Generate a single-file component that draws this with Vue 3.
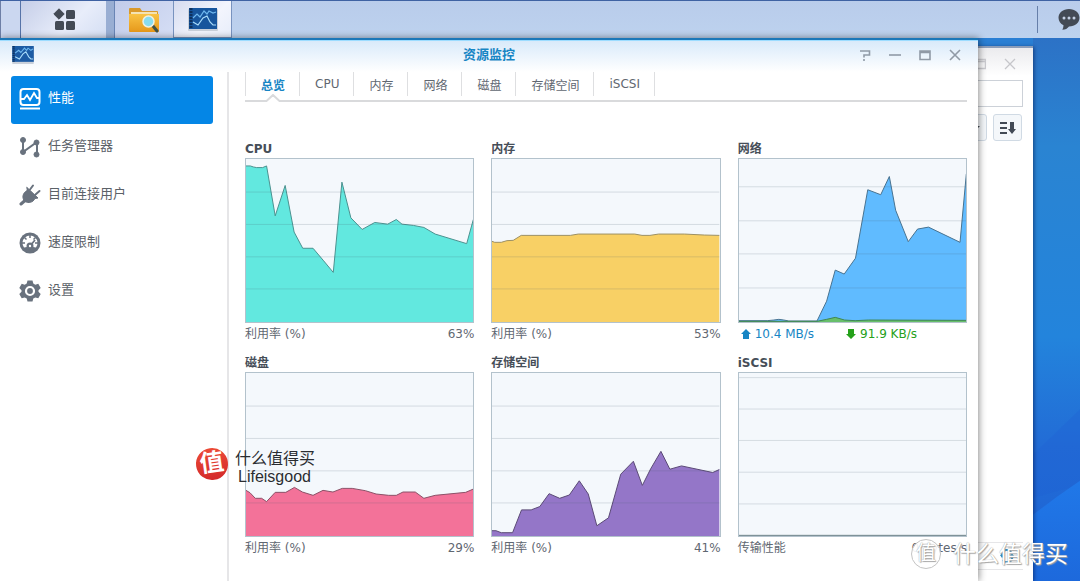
<script setup>
import { ref } from 'vue'

const tabs = ['总览', 'CPU', '内存', '网络', '磁盘', '存储空间', 'iSCSI']
const activeTab = ref('总览')

const menu = [
  { id: 'performance', label: '性能' },
  { id: 'tasks', label: '任务管理器' },
  { id: 'users', label: '目前连接用户' },
  { id: 'speed', label: '速度限制' },
  { id: 'settings', label: '设置' }
]
const activeMenu = ref('performance')

const percentGrid = [100, 198, 296, 393]

const charts = [
  {
    title: 'CPU', label: '利用率 (%)', value: '63%', grid: percentGrid,
    series: [{ fill: '#62e8df', line: '#4c9290', points: '0,21 13,21 22,24 32,26 50,26 62,21 88,172 118,80 145,221 171,270 202,270 234,308 263,343 289,70 316,178 350,213 388,192 427,197 453,183 470,197 505,201 536,207 570,227 665,256 685,183' }]
  },
  {
    title: '内存', label: '利用率 (%)', value: '53%', grid: percentGrid,
    series: [{ fill: '#f8d065', line: '#9d9063', points: '0,249 8,252 28,252 45,247 64,246 88,231 236,231 260,227 430,227 452,231 476,231 502,227 580,227 640,230 685,231' }]
  },
  {
    title: '网络', up: '10.4 MB/s', down: '91.9 KB/s', grid: [84, 187, 287, 390],
    series: [
      { fill: '#60bbff', line: '#497390', points: '0,489 85,489 105,487 120,485 135,487 150,490 235,490 264,430 290,336 317,348 351,300 388,93 427,108 453,53 472,155 510,250 538,212 571,206 666,252 685,45' },
      { fill: '#68bf6b', line: '#3f8554', points: '0,491 235,491 264,485 290,479 318,487 350,489 390,487 685,488' }
    ]
  },
  {
    title: '磁盘', label: '利用率 (%)', value: '29%', grid: percentGrid,
    series: [{ fill: '#f37299', line: '#8b5268', points: '0,355 12,362 28,379 47,379 62,389 88,361 120,361 146,346 170,360 202,370 232,355 262,360 290,349 320,349 360,356 392,366 430,370 453,370 473,360 510,360 536,379 570,370 662,361 685,351' }]
  },
  {
    title: '存储空间', label: '利用率 (%)', value: '41%', grid: percentGrid,
    series: [{ fill: '#9476c8', line: '#5b4a76', points: '0,477 12,477 28,483 62,483 89,414 118,414 144,404 172,365 204,379 233,369 263,326 290,366 316,462 351,438 388,306 426,267 453,340 478,290 509,237 536,291 571,281 665,301 685,292' }]
  },
  {
    title: 'iSCSI', label: '传输性能', value: '0 Bytes/s', grid: [14, 109, 204, 300, 396],
    series: [{ fill: '#a9bcc4', line: '#71878c', points: '0,491 685,491' }]
  }
]
</script>

<template>
  <div class="desktop">
    <svg class="wallpaper" viewBox="0 0 47 541" preserveAspectRatio="none" aria-hidden="true">
      <defs>
        <linearGradient id="sky" x1="0" y1="0" x2="0" y2="1">
          <stop offset="0" stop-color="#2c72c6" />
          <stop offset=".2" stop-color="#2a84d2" />
          <stop offset=".55" stop-color="#2384dc" />
          <stop offset=".75" stop-color="#226cd6" />
          <stop offset="1" stop-color="#1d62d4" />
        </linearGradient>
        <linearGradient id="wave" x1="0" y1="0" x2="0" y2="1">
          <stop offset="0" stop-color="#2078e8" />
          <stop offset="1" stop-color="#1d69dc" />
        </linearGradient>
      </defs>
      <rect width="47" height="541" fill="url(#sky)" />
      <path d="M0 415L47 370V445L0 458z" fill="#1f62d3" opacity=".35" />
      <path d="M0 475L24 457L47 441V541H0z" fill="url(#wave)" />
    </svg>

    <header class="taskbar">
      <span class="edge"></span>
      <button class="task menu-task" aria-label="主菜单">
        <svg width="24" height="24" viewBox="0 0 24 24" fill="#434a55">
          <path d="M7 .8L12.2 6 7 11.2 1.800 6z" stroke="#434a55" stroke-linejoin="round" />
          <rect x="14" y="2" width="9" height="9" rx="1.500" />
          <rect x="3" y="13" width="9" height="9" rx="1.500" />
          <rect x="14" y="13" width="9" height="9" rx="1.500" />
        </svg>
      </button>
      <button class="task app-task" aria-label="File Station">
        <svg width="32" height="28" viewBox="0 0 32 28">
          <defs>
            <linearGradient id="folder" x1="0" y1="0" x2="0" y2="1">
              <stop offset="0" stop-color="#f9c344" /><stop offset="1" stop-color="#e6981b" />
            </linearGradient>
          </defs>
          <path d="M1 3q0-1 1-1h10l2 3h15q1 0 1 1v18H1z" fill="#d9992b" />
          <path d="M3 6h26v4H3z" fill="#f4e3b4" />
          <path d="M1 8h30v17q0 1-1 1H2q-1 0-1-1z" fill="url(#folder)" />
          <path d="M25 20l4 5" stroke="#3e5148" stroke-width="3" stroke-linecap="round" />
          <circle cx="20.500" cy="15.500" r="5.500" fill="#88dcef" stroke="#edf0e3" stroke-width="1.500" />
        </svg>
      </button>
      <button class="task app-task active" aria-label="资源监控">
        <svg width="30" height="26" viewBox="0 0 30 26">
          <rect x="0" y="3" width="30" height="22" rx="1" fill="#c9d0da" />
          <rect x="1" y="2" width="28" height="21" fill="#17559d" />
          <path d="M3 2v21" stroke="#0e3260" stroke-width="3" stroke-dasharray="2 1" />
          <path d="M5 12l4-4 3 3 4-6 3 3 2-3 4 2 3-1" fill="none" stroke="#6fb8ef" stroke-width="1.200" />
          <path d="M5 16l5 3 5-7 4-2 3 6 3 3h3" fill="none" stroke="#a9dcfa" stroke-width="1.200" />
        </svg>
      </button>
      <span class="spacer"></span>
      <span class="tray-line"></span>
      <button class="chat" aria-label="通知">
        <svg width="22" height="24" viewBox="0 0 22 24">
          <path d="M11 1C5 1 .5 4.800.5 9.800c0 3.200 2 6 5 7.500-.1 2-.5 3-1.200 4.500 3 0 5.200-1.300 6.700-3.300 6 0 10.500-3.800 10.500-8.700S17 1 11 1z" fill="#434a55" />
          <g fill="#c4d0e4"><circle cx="6" cy="10" r="1.500" /><circle cx="11" cy="10" r="1.500" /><circle cx="16" cy="10" r="1.500" /></g>
        </svg>
      </button>
    </header>

    <div class="workspace">
      <section class="back-window" aria-label="File Station">
        <div class="back-bar">
          <svg width="12" height="12" viewBox="0 0 12 12" fill="none" stroke="#cbcbd0"><path d="M.5 1.500h11v9H.5zM1 3.500h10" stroke-width="1.500" /></svg>
          <svg width="12" height="12" viewBox="0 0 12 12" fill="none" stroke="#c6c6ca"><path d="M1 1l10 10M11 1L1 11" stroke-width="1.300" /></svg>
        </div>
        <input class="search" type="text" aria-label="搜索" />
        <div class="tools">
          <button aria-label="视图"><svg width="8" height="4" viewBox="0 0 8 4"><path d="M0 0h8L4 4z" fill="#434a55" /></svg></button>
          <button aria-label="排序">
            <svg width="16" height="14" viewBox="0 0 16 14" fill="#434a55"><path d="M0 1h7v2H0zM0 6h7v2H0zM0 11h7v2H0zM10 1h4v7h2l-4 5-4-5h2z" /></svg>
          </button>
        </div>
        <div class="back-foot">
          <button aria-label="刷新">
            <svg width="14" height="14" viewBox="0 0 14 14" fill="none" stroke="#2f89ba" stroke-width="2"><path d="M11 3A5 5 0 0 0 2 7M3 11a5 5 0 0 0 9-4" /><path d="M0 6l2 3 3-3zM9 7l3-3 2 3z" fill="#2f89ba" stroke="none" /></svg>
          </button>
        </div>
      </section>

      <main class="window">
        <div class="titlebar">
          <svg class="app-icon" width="22" height="18" viewBox="0 0 30 25">
            <rect x="0" y="2" width="30" height="23" rx="1" fill="#c9d0da" />
            <rect width="30" height="22" fill="#1c5ba4" />
            <path d="M2 0v22" stroke="#0e3260" stroke-width="3" stroke-dasharray="2 1" />
            <path d="M4 10l5-4 3 3 5-6 3 3 2-3 4 3 3-2" fill="none" stroke="#6fb8ef" stroke-width="1.500" />
            <path d="M4 15l6 3 5-7 4-3 4 7 3 3h3" fill="none" stroke="#a9dcfa" stroke-width="1.500" />
          </svg>
          <h1>资源监控</h1>
          <div class="controls">
            <button aria-label="帮助"><svg width="12" height="12" viewBox="0 0 12 12"><path d="M1 2h9.500v4H5v2.500M5 10v2" /></svg></button>
            <button aria-label="最小化"><svg width="12" height="12" viewBox="0 0 12 12"><path d="M0 6h12" /></svg></button>
            <button aria-label="最大化"><svg width="12" height="12" viewBox="0 0 12 12"><path d="M1 2h10v8.500H1zM1 3.500h10" /></svg></button>
            <button aria-label="关闭"><svg width="12" height="12" viewBox="0 0 12 12"><path d="M1 1l10 10M11 1L1 11" /></svg></button>
          </div>
        </div>

        <div class="body">
          <nav class="sidebar">
            <button
              v-for="item in menu" :key="item.id"
              class="item" :class="{ active: item.id === activeMenu }"
              @click="activeMenu = item.id"
            >
              <svg width="22" height="22" viewBox="0 0 22 22">
                <g v-if="item.id === 'performance'" fill="none" stroke="currentColor" stroke-width="2">
                  <rect x="1.500" y="1" width="19" height="16" rx="3" />
                  <path d="M2 11h3l3-4 3 5 4-7 3 5h2" stroke-width="1.800" />
                  <path d="M1 20.500h20" />
                </g>
                <g v-else-if="item.id === 'tasks'" fill="currentColor" stroke="currentColor">
                  <path d="M4 4v12L18 6v12" fill="none" stroke-width="2" />
                  <circle cx="4" cy="4" r="2.500" /><circle cx="4" cy="16" r="2.500" />
                  <circle cx="17.500" cy="6.500" r="2.500" /><circle cx="17.500" cy="18.500" r="2.500" />
                </g>
                <g v-else-if="item.id === 'users'" fill="currentColor" stroke="currentColor" stroke-linecap="round">
                  <path d="M11 5.500l3-4M16.500 10.500l4-3.500" fill="none" stroke-width="2" />
                  <path d="M2 20l4-3.500" fill="none" stroke-width="3" />
                  <path d="M8 3.500l11 10.500-3 .5c-2 4-6.500 5-10 3-3.500-3.500-2.500-8.500 2-11z" stroke-width="1" stroke-linejoin="round" />
                </g>
                <g v-else-if="item.id === 'speed'">
                  <circle cx="11" cy="11" r="10.500" fill="currentColor" />
                  <path d="M5 15.500A7.500 7.500 0 1 1 17 15.500Q11 14 5 15.500z" fill="#fff" />
                  <path d="M11 3v3M5.500 5.500l2 2M16.500 5.500l-2 2M3 11h3M19 11h-3" fill="none" stroke="currentColor" stroke-width="1.500" />
                  <path d="M11 14l5-6" stroke="currentColor" stroke-width="1.800" />
                  <circle cx="11" cy="14" r="3.500" fill="currentColor" />
                  <circle cx="11" cy="14" r="1.200" fill="#fff" />
                </g>
                <g v-else>
                  <path d="M8.500.5h5l.8 3 2 1.200 3-.9 2.400 4.300-2.200 2.200v1.500l2.200 2.200-2.400 4.200-3-.8-2 1.200-.8 3h-5l-.8-3-2-1.200-3 .8L.3 14l2.200-2.200v-1.500L.3 8.100l2.400-4.300 3 .9 2-1.200z" fill="currentColor" />
                  <circle cx="11" cy="11" r="4" fill="none" stroke="#fff" stroke-width="2.200" />
                </g>
              </svg>
              <span>{{ item.label }}</span>
            </button>
          </nav>

          <div class="content">
            <div class="tabs" role="tablist">
              <button
                v-for="tab in tabs" :key="tab" role="tab"
                class="tab" :class="{ active: tab === activeTab }" :aria-selected="tab === activeTab"
                @click="activeTab = tab"
              >
                {{ tab }}
                <svg v-if="tab === activeTab" class="notch" width="16" height="8" viewBox="0 0 16 8">
                  <path d="M0 8L8 0l8 8z" fill="#fff" /><path d="M0 7h1.500L8 1l6.500 6H16" fill="none" stroke="#d9dadc" stroke-width="2" />
                </svg>
              </button>
            </div>

            <div class="cards">
              <section v-for="chart in charts" :key="chart.title" class="card">
                <h2>{{ chart.title }}</h2>
                <svg class="plot" viewBox="0 0 685 493" preserveAspectRatio="none" role="img" :aria-label="chart.title">
                  <template v-for="s in chart.series" :key="s.fill">
                    <polygon :points="`0,493 ${s.points} 685,493`" :fill="s.fill" />
                    <polyline :points="s.points" fill="none" :stroke="s.line" vector-effect="non-scaling-stroke" />
                  </template>
                  <line v-for="y in chart.grid" :key="y" class="gridline" x1="0" x2="685" :y1="y" :y2="y" vector-effect="non-scaling-stroke" />
                </svg>
                <p v-if="chart.up" class="legend rates">
                  <span class="up"><svg width="10" height="10" viewBox="0 0 10 10"><path d="M5 0l5 5H8v5H2V5H0z" fill="currentColor" /></svg>{{ chart.up }}</span>
                  <span class="down"><svg width="10" height="10" viewBox="0 0 10 10"><path d="M5 10L0 5h2V0h6v5h2z" fill="currentColor" /></svg>{{ chart.down }}</span>
                </p>
                <p v-else class="legend"><span>{{ chart.label }}</span><span>{{ chart.value }}</span></p>
              </section>
            </div>
          </div>
        </div>
      </main>
    </div>

    <div class="brand">
      <span class="seal">值</span>
      <span class="brand-text"><span>什么值得买</span><span class="latin">Lifeisgood</span></span>
    </div>
    <div class="watermark"><span class="ring">值</span><span>什么值得买</span></div>
  </div>
</template>

<style>
body {
  background: #2a7fd4;
}
</style>

<style scoped>
.desktop {
  position: relative;
  display: flex;
  flex-direction: column;
  min-height: 100vh;
  overflow: hidden;
  font-family: "DejaVu Sans", "Noto Sans CJK SC", sans-serif;
  font-size: 12px;
  color: #5f6771;
}
.desktop * {
  box-sizing: border-box;
}
button {
  display: flex;
  align-items: center;
  justify-content: center;
  padding: 0;
  border: 0;
  background: none;
  font: inherit;
  color: inherit;
}
svg {
  display: block;
  flex: none;
}
h1, h2, p {
  margin: 0;
}
.wallpaper {
  position: absolute;
  top: 38px;
  right: 0;
  width: 47px;
  height: calc(100% - 38px);
}
.taskbar {
  position: relative;
  display: flex;
  height: 38px;
  border-top: 1px solid #3f62a3;
  background: linear-gradient(#b9cceb, #bdd2ee);
}
.edge {
  width: 21px;
  border-left: 1px solid #6e7fa6;
  border-right: 1px solid #5673a8;
  background: #cbd7f0;
}
.menu-task {
  width: 85px;
  background: linear-gradient(135deg, #c5cee8, #e8edfa 60%, #d4def3);
}
.app-task {
  width: 59px;
  border-left: 1px solid #6984b4;
  background: linear-gradient(135deg, #c2ccea, #d5def5);
}
.menu-task + .app-task {
  margin-left: 8px;
  box-shadow: -8px 0 0 #99aed3;
}
.app-task.active {
  border: 1px solid #7893bf;
  border-top: 0;
  background: linear-gradient(135deg, #d6dcf0, #f3f5fd 60%, #e7edfa);
}
.spacer {
  flex: 1;
}
.tray-line {
  width: 1px;
  margin: 5px 0;
  background: #667fa9;
}
.chat {
  margin-left: 20px;
  width: 22px;
}
.workspace {
  position: relative;
  display: flex;
  flex: 1;
}
.back-window {
  position: absolute;
  top: 8px;
  right: 47px;
  bottom: 0;
  width: 120px;
  display: flex;
  flex-direction: column;
  border-top: 2px solid #8b9db9;
  background: linear-gradient(#ebebee, #fff 28px);
  box-shadow: 1px 1px 4px rgba(0, 20, 70, .6);
}
.back-bar {
  display: flex;
  align-items: center;
  justify-content: flex-end;
  gap: 18px;
  height: 32px;
  padding-right: 17px;
}
.search {
  height: 27px;
  margin: 0 10px;
  border: 1px solid #ccd1d8;
  background: #fff;
}
.tools {
  display: flex;
  justify-content: flex-end;
  gap: 6px;
  margin: 7px 11px;
}
.tools button {
  width: 29px;
  height: 27px;
  border: 1px solid #d0dae4;
  border-radius: 3px;
  background: #f4f7fa;
}
.tools button:first-child {
  justify-content: flex-end;
  padding-right: 6px;
}
.back-foot {
  display: flex;
  justify-content: flex-end;
  height: 28px;
  margin: auto 10px 11px;
  padding-right: 9px;
  border-top: 1px solid #e6e6e8;
  border-bottom: 1px solid #e6e6e8;
}
.window {
  position: relative;
  display: flex;
  flex: 1;
  flex-direction: column;
  margin-right: 102px;
  border-top: 2px solid #1b77b8;
  background: #fff;
  box-shadow: 1px 0 7px rgba(0, 0, 0, .45);
}
.titlebar {
  display: grid;
  grid-template-columns: 1fr auto 1fr;
  align-items: center;
  height: 32px;
  padding: 0 8px 3px;
  border-top: 1px solid #9cdcff;
  background: linear-gradient(#d9eafa, #fff);
}
.app-icon {
  margin-left: 4px;
}
.titlebar h1 {
  font-size: 13px;
  line-height: 20px;
  color: #1785c4;
}
.controls {
  display: flex;
  justify-content: flex-end;
}
.controls button {
  width: 30px;
  height: 24px;
}
.controls path {
  fill: none;
  stroke: #909aa6;
  stroke-width: 1.6;
}
.body {
  display: flex;
  flex: 1;
}
.sidebar {
  width: 229px;
  padding: 4px 14px 0 11px;
  border-right: 2px solid #e6e6e8;
}
.item {
  justify-content: flex-start;
  gap: 7px;
  width: 100%;
  height: 48px;
  padding: 0 0 2px 8px;
  border-radius: 3px;
  font-size: 13px;
  line-height: 18px;
  color: #69727e;
}
.item span {
  padding-bottom: 2px;
  color: #5b6168;
}
.item.active,
.item.active span {
  color: #fff;
}
.item.active {
  background: #0486e6;
}
.content {
  flex: 1;
  min-width: 0;
  padding: 0 11px 0 16px;
}
.tabs {
  display: flex;
  height: 30px;
  border-bottom: 2px solid #d9dadc;
}
.tab {
  position: relative;
  height: 24px;
  padding: 0 14px 0 15px;
  border-left: 1px solid #dedfe1;
  white-space: nowrap;
}
.tab:last-child {
  border-right: 1px solid #dedfe1;
}
.tab.active {
  font-weight: bold;
  color: #1785c4;
}
.notch {
  position: absolute;
  top: 22px;
  left: calc(50% - 8px);
}
.cards {
  display: grid;
  grid-template-columns: repeat(3, 1fr);
  gap: 9px 17px;
  margin-top: 38px;
}
.card h2 {
  height: 18px;
  font-size: 12px;
  line-height: 18px;
  color: #464e58;
}
.plot {
  width: 100%;
  height: 165px;
  border: 1px solid #b3c2cc;
  background: #f4f8fc;
}
.gridline {
  stroke: #465f6e;
  stroke-opacity: .18;
}
.legend {
  display: flex;
  justify-content: space-between;
  height: 22px;
  line-height: 22px;
}
.rates {
  justify-content: flex-start;
  gap: 32px;
  padding-left: 3px;
}
.rates span {
  display: flex;
  align-items: center;
  gap: 4px;
}
.up {
  color: #1785c4;
}
.down {
  color: #25a11a;
}
.brand {
  position: absolute;
  left: 196px;
  top: 448px;
  display: flex;
  align-items: flex-start;
  gap: 7px;
  font-size: 16px;
  line-height: 18px;
  color: #2b2d31;
}
.seal {
  width: 32px;
  height: 32px;
  border-radius: 50%;
  background: linear-gradient(#ec4a36, #d32a2a);
  font-size: 24px;
  font-weight: bold;
  line-height: 30px;
  text-align: center;
  color: #fff;
  transform: rotate(-8deg);
}
.brand-text {
  display: flex;
  flex-direction: column;
  padding-top: 2px;
  font-family: "Liberation Sans", "Noto Sans CJK SC", sans-serif;
}
.latin {
  padding-left: 3px;
}
.watermark {
  position: absolute;
  right: 12px;
  bottom: 11px;
  display: flex;
  align-items: center;
  gap: 12px;
  font-size: 23px;
  line-height: 32px;
  color: #fff;
  text-shadow: 0 0 1px #8a8a8a, 1px 1px 1px #a8a8a8;
}
.ring {
  width: 30px;
  height: 30px;
  border: 1px solid #c4c4c4;
  border-radius: 50%;
  background: rgba(255, 255, 255, .9);
  font-size: 20px;
  line-height: 26px;
  text-align: center;
}
</style>
